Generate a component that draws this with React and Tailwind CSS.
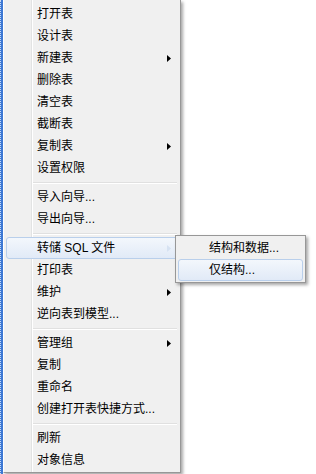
import React from 'react'

const groups = [
  [
    { label: '打开表' },
    { label: '设计表' },
    { label: '新建表', sub: true },
    { label: '删除表' },
    { label: '清空表' },
    { label: '截断表' },
    { label: '复制表', sub: true },
    { label: '设置权限' },
  ],
  [{ label: '导入向导...' }, { label: '导出向导...' }],
  [
    { label: '转储 SQL 文件', sub: true, active: true },
    { label: '打印表' },
    { label: '维护', sub: true },
    { label: '逆向表到模型...' },
  ],
  [
    { label: '管理组', sub: true },
    { label: '复制' },
    { label: '重命名' },
    { label: '创建打开表快捷方式...' },
  ],
  [{ label: '刷新' }, { label: '对象信息' }],
]

function Arrow({ faint }) {
  return (
    <svg width="4" height="7" viewBox="0 0 4 7" className="shrink-0">
      <path d="M0 0 L4 3.5 L0 7 Z" fill={faint ? '#d6e2f2' : '#000'} />
    </svg>
  )
}

function Row({ label, sub, active }) {
  return (
    <div
      className={
        active
          ? 'mx-[2px] h-[22px] flex items-center justify-between pl-[30px] pr-[6px] rounded-[3px] border border-[#b9cfeb] bg-gradient-to-b from-[#f3f7fc] to-[#e1eaf7]'
          : 'mx-[2px] h-[22px] flex items-center justify-between pl-[30px] pr-[6px] border border-transparent'
      }
    >
      <span className="leading-none">{label}</span>
      {sub && <Arrow faint={active} />}
    </div>
  )
}

function Separator() {
  return (
    <div className="h-[7px] flex flex-col justify-center pl-[29px] pr-[3px]">
      <div className="h-px bg-[#e0e0e0]" />
      <div className="h-px bg-white" />
    </div>
  )
}

export default function App() {
  return (
    <div className="w-[316px] h-[474px] bg-white relative overflow-hidden flex text-[12px] text-black font-['Liberation_Sans','Noto_Sans_CJK_SC',sans-serif]">
      {/* dotted selection edge of the window behind */}
      <div className="w-[3px] h-full bg-[#3f7ad6] border-l border-dotted border-[#c9dbf5]" />

      {/* main context menu */}
      <div className="relative w-[178px] h-[473px] bg-[#f0f0f0] border-l border-white border-r border-b border-r-[#979797] border-b-[#979797] pt-[3px] shadow-[2px_2px_3px_rgba(0,0,0,0.35)]">
        <div className="absolute left-[27px] top-0 bottom-0 w-[2px] flex">
          <div className="w-px bg-[#e2e3e3]" />
          <div className="w-px bg-white" />
        </div>
        <div className="relative flex flex-col">
          {groups.map((g, i) => (
            <React.Fragment key={i}>
              {i > 0 && <Separator />}
              {g.map((item) => (
                <Row key={item.label} {...item} />
              ))}
            </React.Fragment>
          ))}
        </div>
      </div>

      {/* submenu of 转储 SQL 文件 */}
      <div className="absolute left-[175px] top-[235px] w-[131px] bg-[#f0f0f0] border border-[#979797] py-[1px] shadow-[2px_2px_3px_rgba(0,0,0,0.35)]">
        <Row label="结构和数据..." />
        <Row label="仅结构..." active />
      </div>
    </div>
  )
}
